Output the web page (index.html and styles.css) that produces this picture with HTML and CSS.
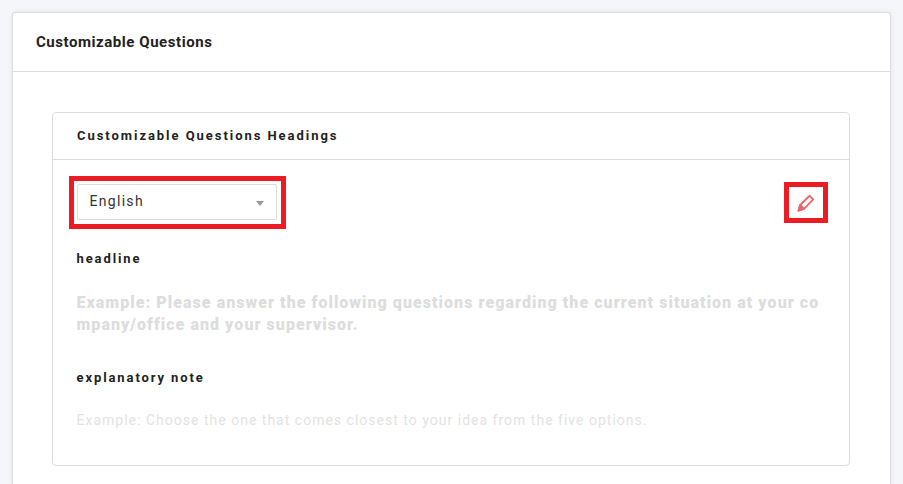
FILE: index.html
```html
<!DOCTYPE html>
<html lang="en">
  <head>
    <meta charset="UTF-8" />
    <title>Customizable Questions</title>
    <link rel="stylesheet" href="styles.css">
  </head>
  <body>
    <div class="card">
      <div class="card-header">Customizable Questions</div>
      <div class="card-body">
        <div class="panel">
          <div class="panel-header">Customizable Questions Headings</div>
          <div class="panel-body">
            <div class="toolbar">
              <div class="mark mark-select">
                <div class="select">
                  <span>English</span>
                  <span class="caret"></span>
                </div>
              </div>
              <div class="mark mark-edit">
                <svg width="18" height="18" viewBox="0 0 18 18" fill="none" stroke="#e8686e" stroke-width="1.9" stroke-linejoin="round">
                  <path d="M1.5 16.5 L3.2 11 L12.6 1.8 L16.2 5.4 L7 14.8 Z" />
                  <path d="M3.2 11 L7 14.8 L1.5 16.5 Z" fill="#e8686e" />
                </svg>
              </div>
            </div>
            <div class="field-label headline-label">headline</div>
            <div class="headline-text">Example: Please answer the following questions regarding the current situation at your company/office and your supervisor.</div>
            <div class="field-label note-label">explanatory note</div>
            <div class="note-text">Example: Choose the one that comes closest to your idea from the five options.</div>
          </div>
        </div>
      </div>
    </div>
  </body>
</html>
```

FILE: styles.css
```css
html,
body {
  height: 100%;
  overflow: hidden;
}

body {
  margin: 0;
  padding: 12px 12px 0 12px;
  box-sizing: border-box;
  background-color: #f4f6fa;
  font-family: Roboto, "Liberation Sans", sans-serif;
  color: #222;
}

.card {
  background-color: #fff;
  border: 1px solid #ddd;
  border-bottom: none;
  border-radius: 3px 3px 0 0;
  box-shadow: 0 0 4px rgba(0, 0, 0, 0.08);
  height: 472px;
}

.card-header {
  height: 58px;
  line-height: 58px;
  padding-left: 23px;
  font-size: 15px;
  font-weight: 700;
  letter-spacing: 0.55px;
  border-bottom: 1px solid #ddd;
}

.card-body {
  padding: 40px 40px 0 39px;
}

.panel {
  border: 1px solid #ddd;
  border-radius: 4px;
  height: 352px;
}

.panel-header {
  height: 46px;
  line-height: 45px;
  padding-left: 24px;
  font-size: 13px;
  font-weight: 700;
  letter-spacing: 1.95px;
  border-bottom: 1px solid #ddd;
}

.panel-body {
  padding: 16px 21px 0 24px;
}

.toolbar {
  display: flex;
  justify-content: space-between;
  align-items: flex-start;
}

.mark {
  border: 5px solid #ed1c24;
  box-sizing: border-box;
}

.mark-select {
  width: 217px;
  height: 53px;
  margin-left: -8px;
  padding: 3px;
}

.mark-edit {
  width: 44px;
  height: 41px;
  margin-top: 6px;
  display: flex;
  align-items: center;
  justify-content: center;
}

.select {
  width: 200px;
  height: 36px;
  box-sizing: border-box;
  border: 1px solid #ddd;
  border-radius: 2px;
  padding: 0 12px 2px 11.5px;
  display: flex;
  align-items: center;
  justify-content: space-between;
  font-size: 14px;
  letter-spacing: 1.3px;
  color: #333;
}

.caret {
  width: 0;
  height: 0;
  border-left: 4px solid transparent;
  border-right: 4px solid transparent;
  border-top: 5px solid #999;
  margin-top: 4px;
  margin-right: 0;
}

.field-label {
  font-size: 13px;
  font-weight: 700;
  letter-spacing: 1.9px;
  line-height: 18px;
  margin-left: -0.5px;
}

.headline-label {
  margin-top: 21px;
}

.headline-text {
  margin-top: 24px;
  margin-left: -0.5px;
  font-size: 16px;
  font-weight: 900;
  letter-spacing: 1.05px;
  line-height: 22px;
  color: #dddddd;
  word-break: break-all;
}

.note-label {
  margin-top: 33px;
}

.note-text {
  margin-top: 23px;
  margin-left: -0.5px;
  font-size: 14px;
  letter-spacing: 1.01px;
  line-height: 20px;
  color: #e3e3e3;
}
```
